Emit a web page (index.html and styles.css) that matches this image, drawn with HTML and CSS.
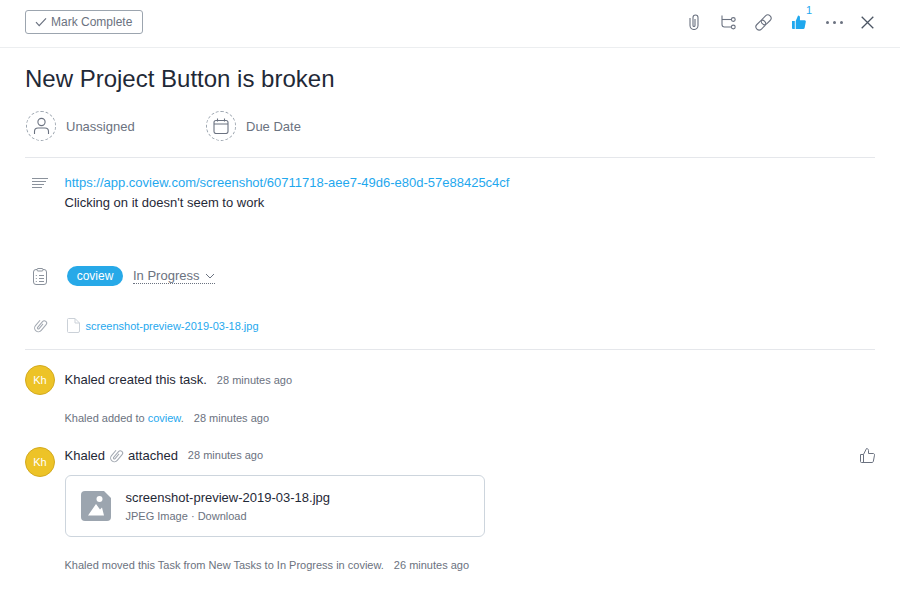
FILE: index.html
```html
<!DOCTYPE html>
<html lang="en">
<head>
    <meta charset="UTF-8" />
    <title>New Project Button is broken</title>
    <link rel="stylesheet" href="styles.css">
</head>
<body>
    <!-- Top bar -->
    <header class="topbar">
        <button class="complete-btn">
            <svg width="12" height="10" viewBox="0 0 12 10"><path d="M1 5.2 4.2 8.6 11 1.4" fill="none" stroke="#6b7280" stroke-width="1.2"/></svg>
            Mark Complete
        </button>
        <div class="actions">
            <svg class="act-clip" width="10" height="16" viewBox="0 0 10 16" fill="none" stroke="#6b7280" stroke-width="1.1"><path d="M6 5v6.500a1 1 0 0 1-2 0V3.500a2.500 2.500 0 0 1 5 0V11.500a4 4 0 0 1-8 0V4"/></svg>
            <svg class="act-tree" width="15" height="15" viewBox="0 0 15 15" fill="none" stroke="#6b7280" stroke-width="1.1"><path d="M1 .5V9.500c0 1.500 1 2.500 2.500 2.500H10.200"/><path d="M1 4.500H10.200"/><circle cx="12.300" cy="4.500" r="1.900"/><circle cx="12.300" cy="12" r="1.900"/></svg>
            <svg class="act-link" width="17" height="17" viewBox="0 0 17 17" fill="none" stroke="#6b7280" stroke-width="1.100"><rect x="5.700" y="2.550" width="11" height="6.500" rx="3.250" transform="rotate(-45 11.200 5.800)"/><rect x=".3" y="7.950" width="11" height="6.500" rx="3.250" transform="rotate(-45 5.800 11.200)"/></svg>
            <span class="like-wrap">
                <svg width="14" height="14" viewBox="0 0 15 15"><path fill="#1fa8ee" d="M0 6.500h3V15H1a1 1 0 0 1-1-1zM4 6.500 6.500.5C7.800.5 8.500 1.300 8.500 2.500V5.500H13.500C14.500 5.500 15 6.300 14.800 7.200L13.500 13.800C13.300 14.600 12.800 15 12 15H4z"/></svg>
                <span class="like-count">1</span>
            </span>
            <span class="dots"><i></i><i></i><i></i></span>
            <svg class="act-close" width="13" height="13" viewBox="0 0 13 13"><path d="M.7.7 12.300 12.300M12.300.7.700 12.300" stroke="#4b5563" stroke-width="1.300"/></svg>
        </div>
    </header>

    <main class="content">
        <h1 class="title">New Project Button is broken</h1>

        <div class="meta">
            <div class="meta-item meta-assignee">
                <span class="dashed-circle">
                    <svg width="17" height="18" viewBox="0 0 17 18" fill="none" stroke="#6b7280" stroke-width="1.100"><circle cx="8.500" cy="5" r="3.600"/><path d="M1.500 17v-2.500c0-2 1.500-3.500 3.500-3.500h7c2 0 3.500 1.500 3.500 3.500V17"/></svg>
                </span>
                Unassigned
            </div>
            <div class="meta-item">
                <span class="dashed-circle">
                    <svg width="16" height="16" viewBox="0 0 16 16" fill="none" stroke="#6b7280" stroke-width="1.100"><rect x="1" y="2.500" width="14" height="13" rx="2"/><path d="M1 6h14M4.500.5v3M11.500.5v3"/></svg>
                </span>
                Due Date
            </div>
        </div>

        <section class="desc-row">
            <svg class="row-icon" width="16" height="11" viewBox="0 0 16 11"><path d="M0 .5h16M0 3.500h14M0 6.500h12M0 9.500h10" stroke="#8b929c" stroke-width="1"/></svg>
            <div class="desc">
                <a href="#">https://app.coview.com/screenshot/60711718-aee7-49d6-e80d-57e88425c4cf</a>
                <p>Clicking on it doesn't seem to work</p>
            </div>
        </section>

        <section class="project-row">
            <svg class="row-icon" width="14" height="17" viewBox="0 0 14 17" fill="none" stroke="#8b929c" stroke-width="1"><rect x=".5" y="1.500" width="13" height="15" rx="2.500"/><rect x="4" y=".5" width="6" height="2.500" rx="1" fill="#fff"/><path d="M2.800 7.500h1M6 7.500h5M2.800 10.500h1M6 10.500h5M2.800 13.500h1M6 13.500h5"/></svg>
            <span class="tag">coview</span>
            <span class="status">In Progress
                <svg width="10" height="6" viewBox="0 0 10 6"><path d="M1 1 5 5 9 1" fill="none" stroke="#6b7280"/></svg>
            </span>
        </section>

        <section class="file-row">
            <svg class="row-icon" width="15" height="15" viewBox="0 0 16 16" fill="none" stroke="#a3a9b2" stroke-width="1.100"><path transform="rotate(40 8 8)" d="M9 5v6.500a1 1 0 0 1-2 0V3.500a2.500 2.500 0 0 1 5 0V11.500a4 4 0 0 1-8 0V4"/></svg>
            <svg class="doc-icon" width="13" height="15" viewBox="0 0 13 15" fill="none" stroke="#cbd1d8" stroke-width="1"><path d="M1.500.5H8L12.500 5v8a1.500 1.500 0 0 1-1.500 1.500H1.500A1 1 0 0 1 .5 13.500V1.500a1 1 0 0 1 1-1zM8 .5V5h4.500"/></svg>
            <a href="#">screenshot-preview-2019-03-18.jpg</a>
        </section>

        <section class="activity">
            <div class="entry entry-created">
                <span class="avatar">Kh</span>
                <span class="entry-text">Khaled created this task.</span>
                <span class="time">28 minutes ago</span>
            </div>
            <div class="note note-added">Khaled added to <a href="#">coview</a>.<span class="note-time">28 minutes ago</span></div>
            <div class="entry entry-attached">
                <span class="avatar">Kh</span>
                <div class="attached-body">
                    <div class="attached-head">
                        <span class="entry-text">Khaled</span>
                        <svg width="15" height="15" viewBox="0 0 16 16" fill="none" stroke="#a3a9b2" stroke-width="1.100"><path transform="rotate(40 8 8)" d="M9 5v6.500a1 1 0 0 1-2 0V3.500a2.500 2.500 0 0 1 5 0V11.500a4 4 0 0 1-8 0V4"/></svg>
                        <span class="entry-text">attached</span>
                        <span class="time">28 minutes ago</span>
                        <svg class="thumb" width="15" height="15" viewBox="0 0 15 15" fill="none" stroke="#6b7280" stroke-width="1"><path d="M.5 6.500h3v8h-2a1 1 0 0 1-1-1zM3.500 6.500 6.500.5c1.200 0 2 .8 2 2v3h4.700c1 0 1.500.8 1.300 1.700l-1.200 6.300c-.2.700-.7 1-1.300 1h-9"/></svg>
                    </div>
                    <div class="file-card">
                        <svg width="30" height="30" viewBox="0 0 30 30"><path fill="#9ca5af" d="M4 0H23L30 7V26a4 4 0 0 1-4 4H4a4 4 0 0 1-4-4V4a4 4 0 0 1 4-4z"/><circle cx="18.500" cy="8" r="3" fill="#fff"/><path fill="#fff" d="M7 24.500 15 13 19 18.500 21 16.500 23 24.500z"/></svg>
                        <div>
                            <div class="file-name">screenshot-preview-2019-03-18.jpg</div>
                            <div class="file-sub">JPEG Image &middot; Download</div>
                        </div>
                    </div>
                </div>
            </div>
            <div class="note note-moved">Khaled moved this Task from New Tasks to In Progress in coview.<span class="note-time">26 minutes ago</span></div>
        </section>
    </main>
</body>
</html>
```

FILE: styles.css
```css
/* Global */
body {
    margin: 0;
    font-family: "Liberation Sans", Arial, sans-serif;
    font-size: 13px;
    color: #1f2937;
    background: #fff;
    overflow: hidden;
}

a {
    color: #1fa8ee;
    text-decoration: none;
}

/* Top bar */
.topbar {
    height: 47px;
    padding: 0 25px;
    display: flex;
    align-items: center;
    justify-content: space-between;
    border-bottom: 1px solid #eceef0;
}

.complete-btn {
    display: flex;
    align-items: center;
    gap: 4px;
    width: 118px;
    height: 24px;
    margin-top: -3px;
    padding: 0 0 0 9px;
    background: #fff;
    border: 1px solid #9ca5af;
    border-radius: 3px;
    font-family: inherit;
    font-size: 12px;
    color: #6b7280;
}

.actions {
    display: flex;
    align-items: center;
    margin-top: -3px;
}

.act-clip { margin-right: 22px; }
.act-tree { margin-right: 19px; }
.act-link { margin-right: 20px; }

.like-wrap {
    position: relative;
    display: flex;
    margin-right: 20px;
}

.like-count {
    position: absolute;
    left: 14px;
    top: -11px;
    font-size: 11px;
    color: #1fa8ee;
}

.dots {
    display: flex;
    gap: 4px;
    margin-right: 18px;
}

.dots i {
    width: 3px;
    height: 3px;
    border-radius: 50%;
    background: #6b7280;
}

.act-close { margin-right: 1px; }

/* Main content */
.content {
    padding: 0 25px;
}

.title {
    margin: 0;
    padding-top: 16px;
    font-size: 24px;
    line-height: 30px;
    font-weight: 400;
    color: #1f2937;
}

.meta {
    display: flex;
    padding: 17px 0 16px 1px;
    border-bottom: 1px solid #e5e7eb;
}

.meta-item {
    display: flex;
    align-items: center;
    gap: 10px;
    color: #6b7280;
}

.meta-assignee {
    width: 180px;
}

.dashed-circle {
    display: flex;
    align-items: center;
    justify-content: center;
    width: 28px;
    height: 28px;
    border: 1px dashed #9ca5af;
    border-radius: 50%;
}

/* Rows */
.desc-row {
    display: flex;
    padding-top: 15px;
}

.desc-row .row-icon {
    margin: 5px 16.5px 0 7px;
}

.desc a, .desc p {
    display: block;
    margin: 0;
    line-height: 20px;
}

.project-row {
    display: flex;
    align-items: center;
    margin-top: 53px;
    height: 20px;
}

.project-row .row-icon {
    margin: 0 20px 0 8px;
}

.tag {
    width: 56px;
    height: 20px;
    line-height: 20px;
    text-align: center;
    border-radius: 10px;
    background: #27a9e8;
    color: #fff;
    font-size: 12px;
}

.status {
    margin-left: 10px;
    color: #6b7280;
    border-bottom: 1px dotted #6b7280;
    line-height: 15px;
    display: flex;
    align-items: center;
    gap: 6px;
}

.file-row {
    display: flex;
    align-items: center;
    margin-top: 32px;
    padding-bottom: 16px;
    font-size: 11px;
    border-bottom: 1px solid #e5e7eb;
}

.file-row .row-icon {
    margin: 0 19px 0 8px;
}

.doc-icon {
    margin-right: 5.5px;
}

/* Activity */
.entry {
    display: flex;
}

.avatar {
    flex: none;
    width: 28px;
    height: 28px;
    border: 1px solid #d3aa1f;
    border-radius: 50%;
    background: #edc327;
    color: #fff;
    font-size: 11px;
    line-height: 28px;
    text-align: center;
}

.entry-created {
    align-items: center;
    margin-top: 15px;
}

.entry-created .entry-text {
    margin-left: 9.5px;
    margin-bottom: 2px;
}

.time {
    margin-left: 10px;
    font-size: 11px;
    color: #6b7280;
}

.note {
    margin-left: 39.5px;
    font-size: 11px;
    color: #6b7280;
}

.note-time {
    margin-left: 10px;
}

.note-added {
    margin-top: 16px;
    line-height: 14px;
}

.entry-attached {
    margin-top: 22px;
}

.attached-body {
    flex: 1;
    margin-left: 9.5px;
}

.attached-head {
    display: flex;
    align-items: center;
    gap: 4px;
    height: 16px;
}

.attached-head .time {
    margin-left: 6px;
}

.thumb {
    margin-left: auto;
}

.file-card {
    display: flex;
    align-items: center;
    gap: 15px;
    width: 388px;
    height: 60px;
    margin-top: 12px;
    padding: 0 15px;
    border: 1px solid #cdd5dd;
    border-radius: 6px;
}

.file-name {
    line-height: 20px;
}

.file-sub {
    font-size: 11px;
    line-height: 16px;
    color: #6b7280;
}

.note-moved {
    margin-top: 21px;
    line-height: 14px;
}
```
